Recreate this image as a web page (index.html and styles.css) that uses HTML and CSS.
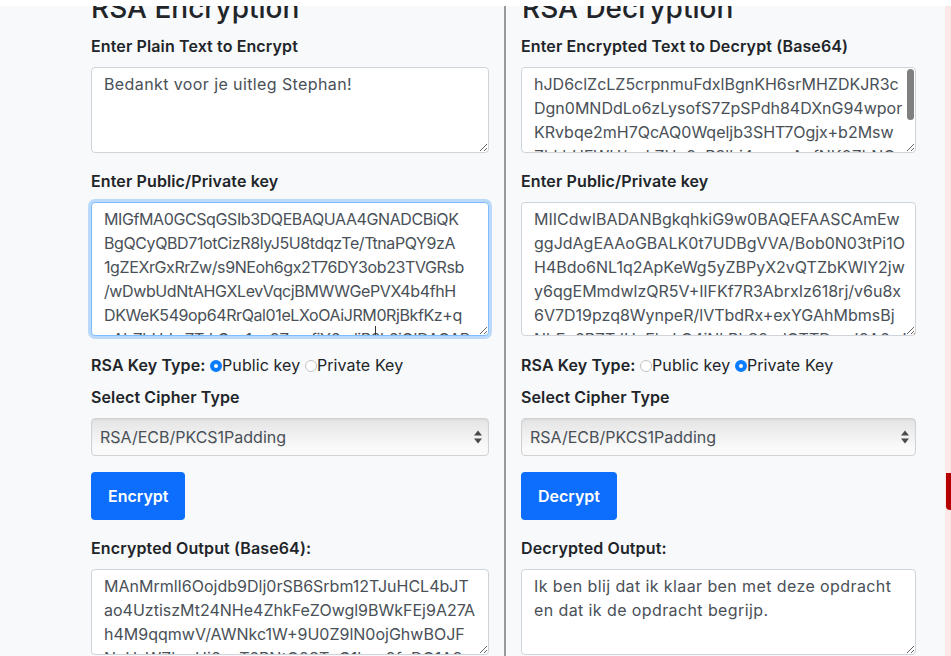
FILE: index.html
```html
<!DOCTYPE html>
<html lang="nl">
<head>
<meta charset="utf-8">
<title>RSA Encryption</title>
<link rel="stylesheet" href="styles.css">
</head>
<body>
<div class="topbar"></div>
<main class="page">
  <section class="col col-enc">
    <h3 class="title">RSA Encryption</h3>
    <label class="lbl">Enter Plain Text to Encrypt</label>
    <div class="group">
      <textarea class="field plain prose" wrap="off">Bedankt voor je uitleg Stephan!</textarea>
    </div>
    <label class="lbl">Enter Public/Private key</label>
    <div class="group">
      <textarea class="field key focused tight" wrap="off">MIGfMA0GCSqGSIb3DQEBAQUAA4GNADCBiQK
BgQCyQBD71otCizR8lyJ5U8tdqzTe/TtnaPQY9zA
1gZEXrGxRrZw/s9NEoh6gx2T76DY3ob23TVGRsb
/wDwbUdNtAHGXLevVqcjBMWWGePVX4b4fhH
DKWeK549op64RrQal01eLXoOAiJRM0RjBkfKz+q
oAbZhHdwZTrkGxo1qa9ZgwfiY6sdjR2k6iQIDAQAB</textarea>
      <span class="caret"></span>
    </div>
    <div class="keytype">
      <b>RSA Key Type:</b> <input type="radio" name="kt1" class="radio" checked>Public key <input type="radio" name="kt1" class="radio">Private Key
    </div>
    <label class="lbl">Select Cipher Type</label>
    <div class="group select-wrap">
      <select class="select"><option>RSA/ECB/PKCS1Padding</option></select>
      <svg class="arrows" width="8" height="14" viewBox="0 0 8 14"><path d="M0 5.5L4 0.5L8 5.5Z M0 8.5L8 8.5L4 13.5Z" fill="#4a4a4a"/></svg>
    </div>
    <div class="group"><button class="btn">Encrypt</button></div>
    <label class="lbl">Encrypted Output (Base64):</label>
    <div class="group">
      <textarea class="field out" wrap="off">MAnMrmlI6Oojdb9Dlj0rSB6Srbm12TJuHCL4bJT
ao4UztiszMt24NHe4ZhkFeZOwgl9BWkFEj9A27A
h4M9qqmwV/AWNkc1W+9U0Z9lN0ojGhwBOJF
NcHcWZbmUj6nqT6RNtQ2ST+G1bqy9fnDQ1A8=</textarea>
    </div>
  </section>

  <section class="col col-dec">
    <h3 class="title">RSA Decryption</h3>
    <label class="lbl">Enter Encrypted Text to Decrypt (Base64)</label>
    <div class="group">
      <textarea class="field plain" wrap="off">hJD6clZcLZ5crpnmuFdxlBgnKH6srMHZDKJR3c
Dgn0MNDdLo6zLysofS7ZpSPdh84DXnG94wpor
KRvbqe2mH7QcAQ0Wqeljb3SHT7Ogjx+b2Msw
ZhkbHFWH/ucLZHq9aP3lbj4mnqrA+fNK0ZhNQ
q1TyB3mc8dXr0ZPz2vL6ua4Hw==</textarea>
      <span class="thumb"></span>
    </div>
    <label class="lbl">Enter Public/Private key</label>
    <div class="group">
      <textarea class="field key" wrap="off">MIICdwIBADANBgkqhkiG9w0BAQEFAASCAmEw
ggJdAgEAAoGBALK0t7UDBgVVA/Bob0N03tPi1O
H4Bdo6NL1q2ApKeWg5yZBPyX2vQTZbKWlY2jw
y6qgEMmdwlzQR5V+IlFKf7R3AbrxIz618rj/v6u8x
6V7D19pzq8WynpeR/lVTbdRx+exYGAhMbmsBj
NbEe6PZTdHuFkcLQ4jNkRhS2cdOTTDaqJ8A6yJd</textarea>
    </div>
    <div class="keytype">
      <b>RSA Key Type:</b> <input type="radio" name="kt2" class="radio">Public key <input type="radio" name="kt2" class="radio" checked>Private Key
    </div>
    <label class="lbl">Select Cipher Type</label>
    <div class="group select-wrap">
      <select class="select"><option>RSA/ECB/PKCS1Padding</option></select>
      <svg class="arrows" width="8" height="14" viewBox="0 0 8 14"><path d="M0 5.5L4 0.5L8 5.5Z M0 8.5L8 8.5L4 13.5Z" fill="#4a4a4a"/></svg>
    </div>
    <div class="group"><button class="btn">Decrypt</button></div>
    <label class="lbl">Decrypted Output:</label>
    <div class="group">
      <textarea class="field out prose" wrap="off">Ik ben blij dat ik klaar ben met deze opdracht
en dat ik de opdracht begrijp.</textarea>
    </div>
  </section>

  <aside class="col-side"><span class="side-btn"></span></aside>
</main>
</body>
</html>
```

FILE: styles.css
```css
* { box-sizing: border-box; }
html, body { margin: 0; padding: 0; }
body {
  background: #f8f9fa;
  font-family: Inter, "Open Sans", "Liberation Sans", sans-serif;
  color: #212529;
  font-size: 16px;
  line-height: 24px;
  overflow: hidden;
  height: 656px;
}
.topbar {
  position: fixed;
  top: 0; left: 0; right: 0;
  height: 6px;
  background: #fff;
  z-index: 5;
}
.page {
  display: flex;
  margin-top: -9px;
  min-height: 700px;
}
.col-enc {
  width: 504px;
  padding: 0 15px 0 91px;
}
.col-dec {
  width: 441px;
  border-left: 2px solid #9a9a9a;
  padding: 0 29px 0 15px;
}
.col-side {
  flex: 1;
  background: #fde7e7;
  padding-top: 482px;
}
.side-btn {
  display: block;
  height: 37px;
  margin-left: 1px;
  background: #b60000;
  border-bottom-left-radius: 4px;
}
.title {
  margin: 0 0 8px;
  font-size: 28px;
  line-height: 34px;
  font-weight: 500;
}
.col-dec .title { padding-left: 1px; }
.lbl {
  display: block;
  font-weight: 600;
  padding-top: 1px;
  margin-bottom: 9px;
  letter-spacing: 0.12px;
}
.group {
  position: relative;
  margin-bottom: 15px;
}
.field {
  display: block;
  width: 100%;
  margin: 0;
  border: 1px solid #ced4da;
  border-radius: 4px;
  background: #fff;
  color: #495057;
  font-family: inherit;
  font-size: 16px;
  line-height: 24px;
  padding: 4px 12px 6px;
  white-space: pre;
  overflow: hidden;
  outline: none;
}
.prose { letter-spacing: 0.4px; }
.tight { letter-spacing: -0.4px; }
.plain { height: 86px; }
.key { height: 134px; }
.out { height: 86px; }
.focused {
  border-color: #80bdff;
  box-shadow: 0 0 0 3px rgba(0, 123, 255, .25);
}
.caret {
  position: absolute;
  left: 284px;
  top: 124px;
  width: 1px;
  height: 9px;
  background: #333;
}
.thumb {
  position: absolute;
  right: 2px;
  top: 2px;
  width: 7px;
  height: 51px;
  border-radius: 4px;
  background: #808080;
}
.keytype {
  padding-top: 2px;
  margin-bottom: 7px;
  white-space: nowrap;
  letter-spacing: 0.1px;
}
.keytype b { font-weight: 600; }
.radio {
  -webkit-appearance: none;
  appearance: none;
  width: 12px;
  height: 12px;
  margin: 0;
  border-radius: 50%;
  border: 1px solid #c4c4c4;
  background: #fff;
  vertical-align: -1px;
}
.radio:checked {
  border: 4px solid #0a7cff;
}
.select-wrap { margin-bottom: 16px; }
.select {
  -webkit-appearance: none;
  appearance: none;
  display: block;
  width: 100%;
  height: 38px;
  margin: 0;
  padding: 0 24px 0 8px;
  border: 1px solid #d0d3d6;
  border-radius: 4px;
  background: linear-gradient(#e4e4e4, #fafafa 80%);
  box-shadow: inset 0 1px 2px rgba(0,0,0,.06);
  color: #495057;
  font-family: inherit;
  font-size: 16px;
}
.arrows {
  position: absolute;
  right: 7px;
  top: 12px;
}
.btn {
  height: 48px;
  padding: 0 17px;
  border: 0;
  border-radius: 4px;
  background: #0d6efd;
  color: #fff;
  font-family: inherit;
  font-size: 16px;
  font-weight: 600;
}
```
